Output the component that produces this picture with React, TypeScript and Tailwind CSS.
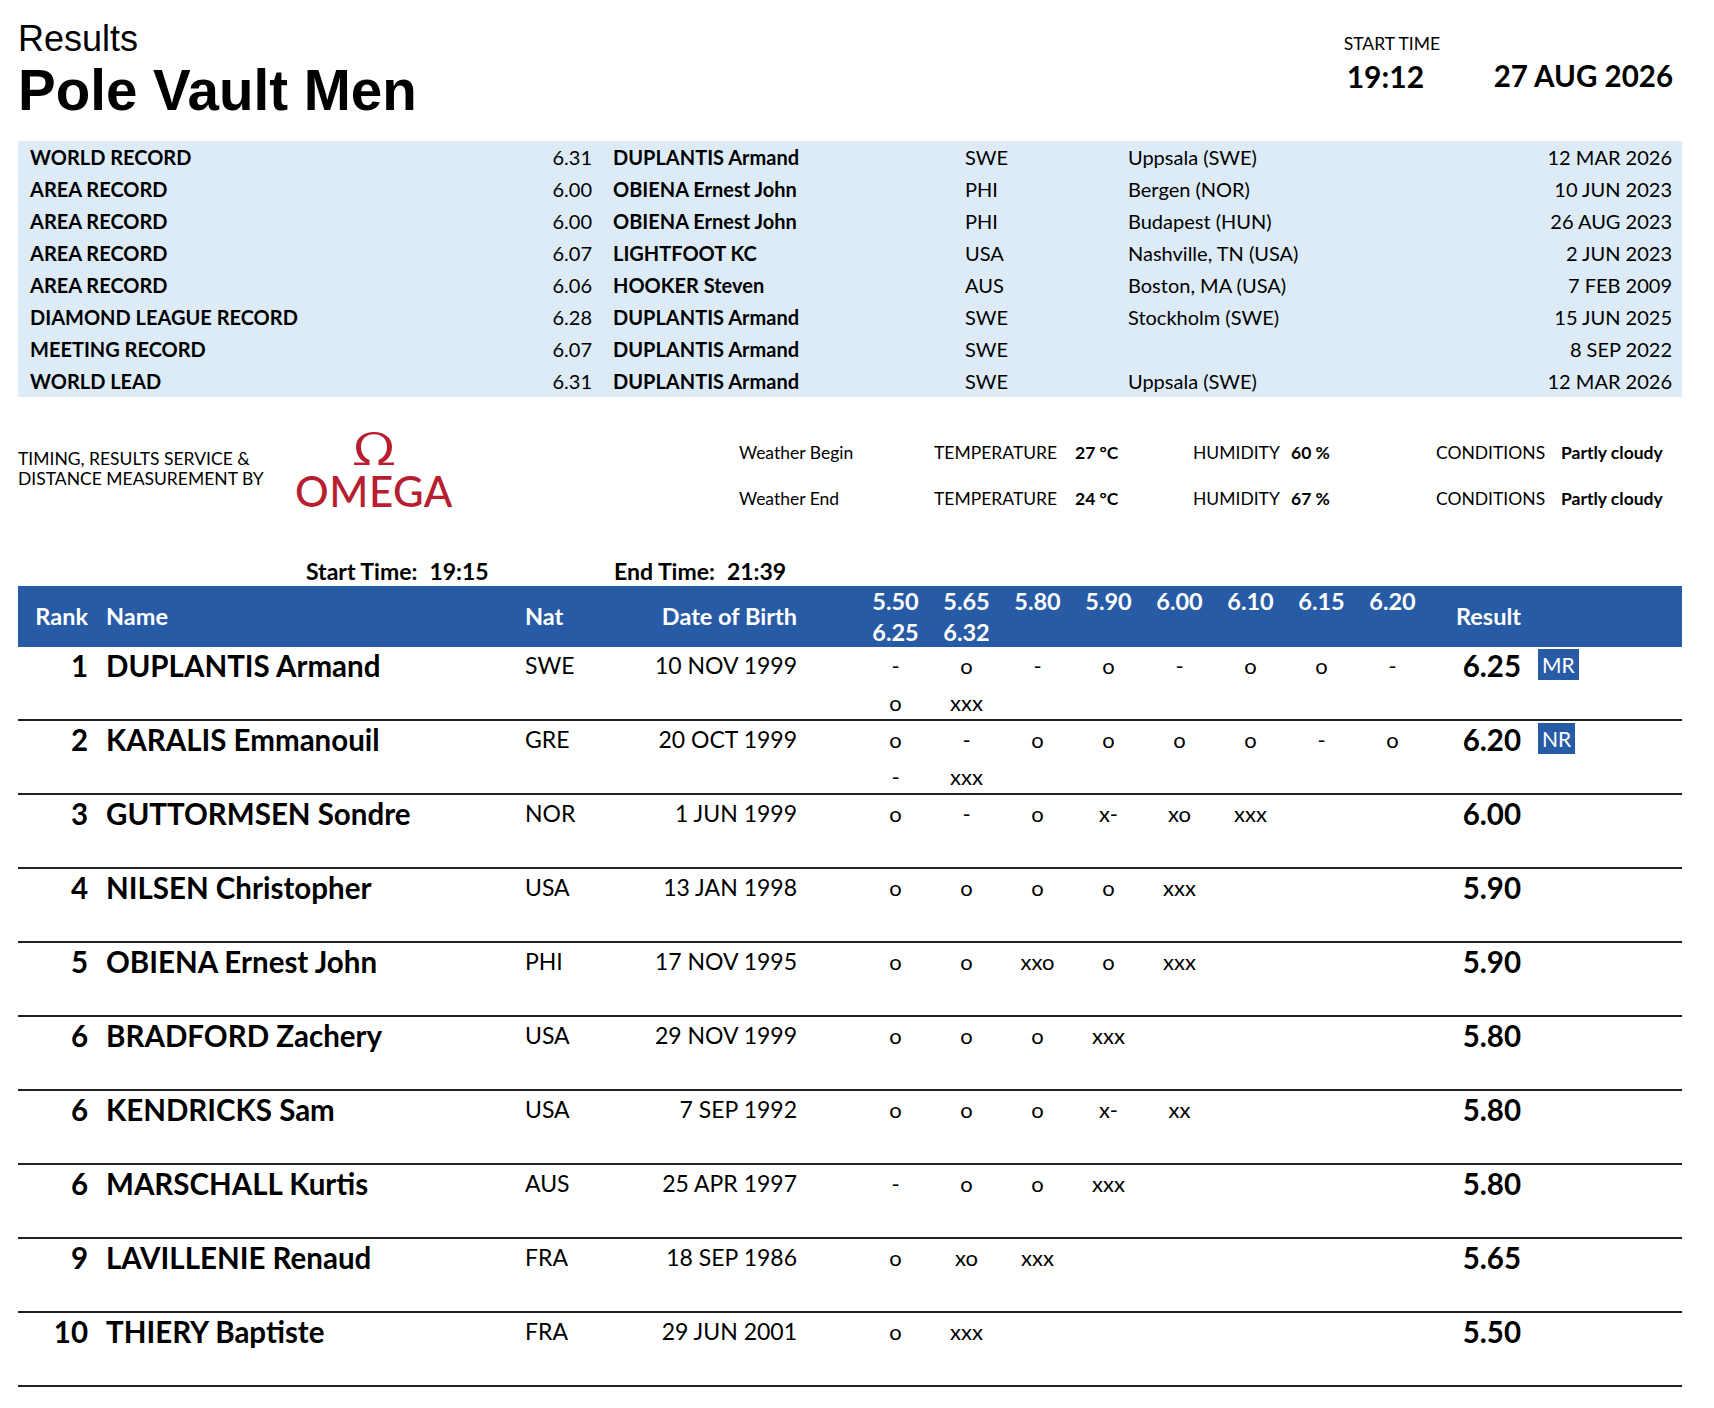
import * as React from 'react';

const HEIGHTS = ['5.50', '5.65', '5.80', '5.90', '6.00', '6.10', '6.15', '6.20', '6.25', '6.32'];

const RECORDS = [
  { label: 'WORLD RECORD', mark: '6.31', name: 'DUPLANTIS Armand', nat: 'SWE', venue: 'Uppsala (SWE)', date: '12 MAR 2026' },
  { label: 'AREA RECORD', mark: '6.00', name: 'OBIENA Ernest John', nat: 'PHI', venue: 'Bergen (NOR)', date: '10 JUN 2023' },
  { label: 'AREA RECORD', mark: '6.00', name: 'OBIENA Ernest John', nat: 'PHI', venue: 'Budapest (HUN)', date: '26 AUG 2023' },
  { label: 'AREA RECORD', mark: '6.07', name: 'LIGHTFOOT KC', nat: 'USA', venue: 'Nashville, TN (USA)', date: '2 JUN 2023' },
  { label: 'AREA RECORD', mark: '6.06', name: 'HOOKER Steven', nat: 'AUS', venue: 'Boston, MA (USA)', date: '7 FEB 2009' },
  { label: 'DIAMOND LEAGUE RECORD', mark: '6.28', name: 'DUPLANTIS Armand', nat: 'SWE', venue: 'Stockholm (SWE)', date: '15 JUN 2025' },
  { label: 'MEETING RECORD', mark: '6.07', name: 'DUPLANTIS Armand', nat: 'SWE', venue: '', date: '8 SEP 2022' },
  { label: 'WORLD LEAD', mark: '6.31', name: 'DUPLANTIS Armand', nat: 'SWE', venue: 'Uppsala (SWE)', date: '12 MAR 2026' },
];

interface Athlete {
  rank: string;
  name: string;
  nat: string;
  dob: string;
  marks: string[];
  result: string;
  badge?: string;
}

const ATHLETES: Athlete[] = [
  { rank: '1', name: 'DUPLANTIS Armand', nat: 'SWE', dob: '10 NOV 1999', marks: ['-', 'o', '-', 'o', '-', 'o', 'o', '-', 'o', 'xxx'], result: '6.25', badge: 'MR' },
  { rank: '2', name: 'KARALIS Emmanouil', nat: 'GRE', dob: '20 OCT 1999', marks: ['o', '-', 'o', 'o', 'o', 'o', '-', 'o', '-', 'xxx'], result: '6.20', badge: 'NR' },
  { rank: '3', name: 'GUTTORMSEN Sondre', nat: 'NOR', dob: '1 JUN 1999', marks: ['o', '-', 'o', 'x-', 'xo', 'xxx'], result: '6.00' },
  { rank: '4', name: 'NILSEN Christopher', nat: 'USA', dob: '13 JAN 1998', marks: ['o', 'o', 'o', 'o', 'xxx'], result: '5.90' },
  { rank: '5', name: 'OBIENA Ernest John', nat: 'PHI', dob: '17 NOV 1995', marks: ['o', 'o', 'xxo', 'o', 'xxx'], result: '5.90' },
  { rank: '6', name: 'BRADFORD Zachery', nat: 'USA', dob: '29 NOV 1999', marks: ['o', 'o', 'o', 'xxx'], result: '5.80' },
  { rank: '6', name: 'KENDRICKS Sam', nat: 'USA', dob: '7 SEP 1992', marks: ['o', 'o', 'o', 'x-', 'xx'], result: '5.80' },
  { rank: '6', name: 'MARSCHALL Kurtis', nat: 'AUS', dob: '25 APR 1997', marks: ['-', 'o', 'o', 'xxx'], result: '5.80' },
  { rank: '9', name: 'LAVILLENIE Renaud', nat: 'FRA', dob: '18 SEP 1986', marks: ['o', 'xo', 'xxx'], result: '5.65' },
  { rank: '10', name: 'THIERY Baptiste', nat: 'FRA', dob: '29 JUN 2001', marks: ['o', 'xxx'], result: '5.50' },
];

const WEATHER = [
  { label: 'Weather Begin', temp: '27 °C', hum: '60 %', cond: 'Partly cloudy' },
  { label: 'Weather End', temp: '24 °C', hum: '67 %', cond: 'Partly cloudy' },
];

// Omega brand symbol: thick sides, thin crown, legs flaring into feet
function OmegaSymbol() {
  return (
    <svg width="42" height="35" viewBox="0 0 42 35" fill="#b71f31">
      <path d="M16.5 34 L1 34 L1 31.6 L12.5 31.6 C6 28.5 3 22.5 3 15.5 C3 6.8 11 1 21 1 C31 1 39 6.8 39 15.5 C39 22.5 36 28.5 29.5 31.6 L41 31.6 L41 34 L25.5 34 L25.5 29 C31.5 26.5 34 21.5 34 15.5 C34 8 28.5 3.2 21 3.2 C13.5 3.2 8 8 8 15.5 C8 21.5 10.5 26.5 16.5 29 Z" />
    </svg>
  );
}

export default function App() {
  return (
    <div className="w-[1714px] min-h-[1408px] bg-white text-black [font-family:Lato,'Noto_Sans',sans-serif]">
      <div className="w-[1664px] ml-[18px]">
        {/* ── Title ───────────────────────────── */}
        <div className="h-[141px] flex justify-between">
          <div className="pt-[21px] [font-family:'Liberation_Sans',Arial,sans-serif]">
            <div className="text-[36px] leading-[35px]">Results</div>
            <div className="mt-[7px] text-[56.5px] leading-[56px] font-bold">Pole Vault Men</div>
          </div>
          <div className="flex items-end pt-[34px] pr-[9px] self-start">
            <div className="w-[147px]">
              <div className="text-[17.5px] leading-[20px] ml-[-3px]">START TIME</div>
              <div className="mt-[4px] text-[30px] leading-[36px] font-bold">19:12</div>
            </div>
            <div className="text-[29.5px] leading-[36px] font-bold">27 AUG 2026</div>
          </div>
        </div>

        {/* ── Records ─────────────────────────── */}
        <div className="bg-[#ddebf7] pl-[12px] pr-[10px] text-[20px]">
          {RECORDS.map((r, i) => (
            <div key={i} className="h-[32px] flex items-center">
              <div className="w-[490px] font-bold">{r.label}</div>
              <div className="w-[72px] text-right">{r.mark}</div>
              <div className="ml-[21px] w-[352px] font-bold">{r.name}</div>
              <div className="w-[163px]">{r.nat}</div>
              <div className="flex-1">{r.venue}</div>
              <div className="text-right">{r.date}</div>
            </div>
          ))}
        </div>

        {/* ── Timing + weather ───────────────── */}
        <div className="h-[160px] flex">
          <div className="w-[275px] pt-[52px] text-[17.5px] leading-[20px]">
            <div>TIMING, RESULTS SERVICE &amp;</div>
            <div>DISTANCE MEASUREMENT BY</div>
          </div>
          <div className="w-[162px] pt-[34px] flex flex-col items-center text-[#b71f31]">
            <OmegaSymbol />
            <span className="mt-[6px] text-[42px] leading-[38px] font-medium tracking-[0.5px]">OMEGA</span>
          </div>
          <div className="ml-[284px] pt-[33px] text-[17.5px]">
            {WEATHER.map(w => (
              <div key={w.label} className="h-[46px] flex items-center">
                <div className="w-[195px]">{w.label}</div>
                <div className="w-[141px]">TEMPERATURE</div>
                <div className="w-[118px] font-bold">{w.temp}</div>
                <div className="w-[98px]">HUMIDITY</div>
                <div className="w-[145px] font-bold">{w.hum}</div>
                <div className="w-[125px]">CONDITIONS</div>
                <div className="font-bold">{w.cond}</div>
              </div>
            ))}
          </div>
        </div>

        {/* ── Start / end ─────────────────────── */}
        <div className="h-[29px] flex items-center text-[23px] font-bold ml-[288px]">
          <div className="w-[308px] flex gap-[12px]">
            <span>Start Time:</span>
            <span>19:15</span>
          </div>
          <div className="flex gap-[12px]">
            <span>End Time:</span>
            <span>21:39</span>
          </div>
        </div>

        {/* ── Results table ───────────────────── */}
        <div className="h-[61px] flex bg-[#285ba6] text-white text-[23.5px] font-bold">
          <div className="w-[70px] self-center text-right">Rank</div>
          <div className="w-[437px] pl-[18px] self-center">Name</div>
          <div className="w-[120px] self-center">Nat</div>
          <div className="w-[152px] self-center text-right">Date of Birth</div>
          <div className="ml-[63px] w-[568px] flex flex-wrap leading-[30px]">
            {HEIGHTS.map(h => (
              <div key={h} className="w-[71px] text-center">{h}</div>
            ))}
          </div>
          <div className="w-[93px] self-center text-right">Result</div>
        </div>

        {ATHLETES.map((a, i) => (
          <div key={i} className="h-[74px] flex items-start border-b-2 border-[#222] leading-[37px]">
            <div className="w-[70px] text-right text-[29.5px] font-bold">{a.rank}</div>
            <div className="w-[437px] pl-[18px] text-[29.5px] font-bold whitespace-nowrap">{a.name}</div>
            <div className="w-[120px] text-[23px]">{a.nat}</div>
            <div className="w-[152px] text-right text-[23px] whitespace-nowrap">{a.dob}</div>
            <div className="ml-[63px] w-[568px] flex flex-wrap text-[22px]">
              {a.marks.map((m, j) => (
                <div key={j} className="w-[71px] h-[37px] text-center">{m}</div>
              ))}
            </div>
            <div className="w-[93px] text-right text-[29.5px] font-bold">{a.result}</div>
            {a.badge && (
              <div className="ml-[17px] mt-[2px] h-[31px] px-[4px] bg-[#285ba6] text-white text-[21px] leading-[31px]">
                {a.badge}
              </div>
            )}
          </div>
        ))}
      </div>
    </div>
  );
}
